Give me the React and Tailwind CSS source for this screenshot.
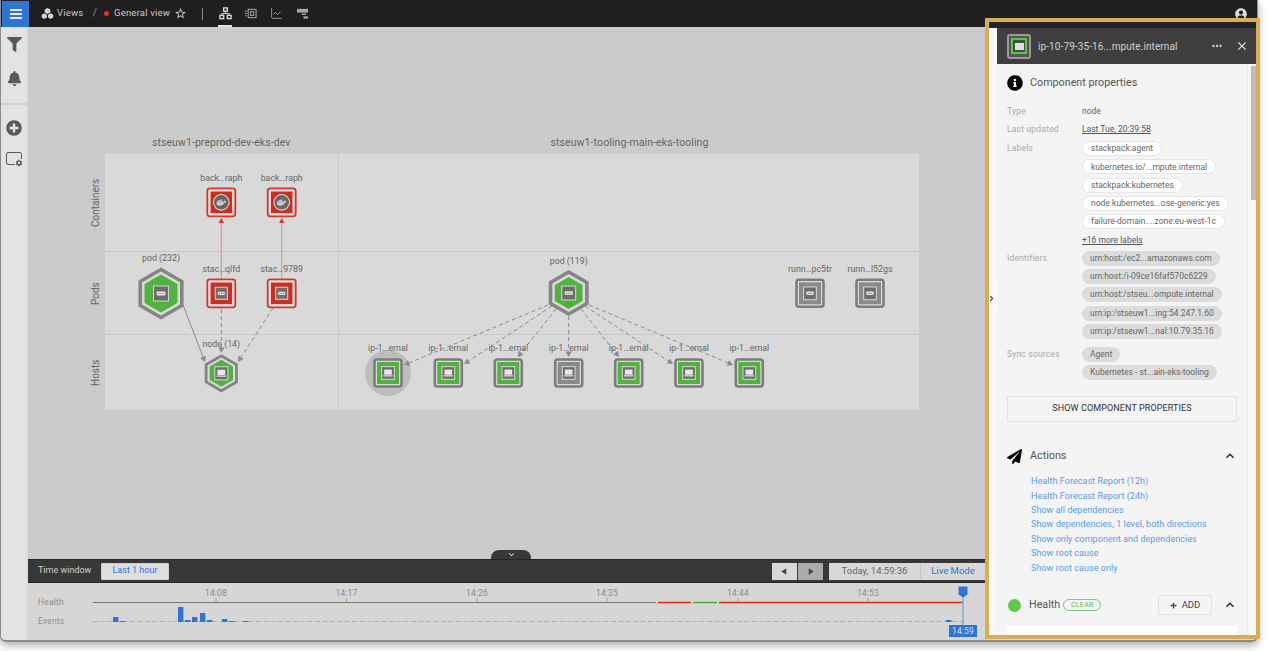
import React from 'react';
import { FaBell, FaDocker, FaFilter, FaInfoCircle, FaPaperPlane, FaPlus, FaPlusCircle, FaUserCircle } from 'react-icons/fa';
import { MdStarBorder, MdKeyboardArrowUp, MdKeyboardArrowDown, MdSearch, MdClose, MdMoreHoriz, MdChevronRight, MdFormatListBulleted, MdPlayArrow, MdSettings } from 'react-icons/md';
import { LineChart } from 'lucide-react';

const hexPoints = (cx, cy, r) => {
  const w = r * 0.866;
  return `${cx},${cy - r} ${cx + w},${cy - r / 2} ${cx + w},${cy + r / 2} ${cx},${cy + r} ${cx - w},${cy + r / 2} ${cx - w},${cy - r / 2}`;
};

const Glyph = ({ x, y, type, s = 1 }) => {
  if (type === 'docker') {
    return (
      <g>
        <circle cx={x} cy={y} r={7.8} fill="#666" stroke="#d8d8d8" strokeWidth="1.1" />
        <FaDocker x={x - 5} y={y - 5} size={10} color="#cfcfcf" />
      </g>
    );
  }
  const h = 7.5 * s;
  return (
    <g>
      <rect x={x - h} y={y - h} width={h * 2} height={h * 2} fill="#6e6e6e" stroke="#cfcfcf" strokeWidth="1.1" />
      {type === 'pod' ? (
        <g>
          <rect x={x - 4.4 * s} y={y - 2 * s} width={8.8 * s} height={4 * s} rx={1} fill="#e8e8e8" />
          <circle cx={x - 2.2 * s} cy={y} r={0.6} fill="#555" />
          <circle cx={x} cy={y} r={0.6} fill="#555" />
          <circle cx={x + 2.2 * s} cy={y} r={0.6} fill="#555" />
        </g>
      ) : (
        <g>
          <rect x={x - 4.5 * s} y={y - 4 * s} width={9 * s} height={6 * s} fill="#e8e8e8" />
          <rect x={x - 5.5 * s} y={y + 2.5 * s} width={11 * s} height={1.6 * s} fill="#d6d6d6" />
        </g>
      )}
    </g>
  );
};

const RedNode = ({ x, y, type }) => (
  <g>
    <rect x={x - 14} y={y - 14} width={28} height={28} rx={2.5} fill="#dcdcdc" stroke="#d8362a" strokeWidth="1.8" />
    <rect x={x - 11.2} y={y - 11.2} width={22.4} height={22.4} fill="#d02c20" stroke="#e6e6e6" strokeWidth="0.8" />
    <Glyph x={x} y={y} type={type} s={0.8} />
  </g>
);

const SquareNode = ({ x, y, type = 'host', fill = '#4fb33d' }) => (
  <g>
    <rect x={x - 13.5} y={y - 13.5} width={27} height={27} rx={2.5} fill="#dadada" stroke="#7c7c7c" strokeWidth="2.6" />
    <rect x={x - 11} y={y - 11} width={22} height={22} fill={fill} />
    <Glyph x={x} y={y} type={type} s={0.85} />
  </g>
);

const HexNode = ({ x, y, r, type, s = 1 }) => (
  <g>
    <polygon points={hexPoints(x, y, r)} fill="#d9d9d9" stroke="#858585" strokeWidth={r > 20 ? 3.6 : 2.8} />
    <polygon points={hexPoints(x, y, r - (r > 20 ? 5 : 4))} fill="#4fb33d" />
    <Glyph x={x} y={y} type={type} s={s} />
  </g>
);

const NodeLabel = ({ x, y, children }) => (
  <text x={x} y={y} textAnchor="middle" fontSize="8.8" fill="#666">
    {children}
  </text>
);

const hostXs = [388, 448.3, 508.3, 568.7, 628.7, 689, 749.3];
const podEdges = [
  [548, 305, 404, 365],
  [552, 306, 464, 364],
  [556, 309, 517.7, 357],
  [568.7, 316, 568.7, 357],
  [581, 309, 619, 357],
  [585, 306, 673, 364],
  [589, 305, 733, 365],
];

const Arrow = ({ x1, y1, x2, y2, color = '#8a8a8a', dashed, size = 5 }) => {
  const a = Math.atan2(y2 - y1, x2 - x1);
  const bx = x2 - Math.cos(a) * size * 1.1;
  const by = y2 - Math.sin(a) * size * 1.1;
  const px = Math.sin(a) * size * 0.62;
  const py = -Math.cos(a) * size * 0.62;
  return (
    <g>
      <line x1={x1} y1={y1} x2={bx} y2={by} stroke={color} strokeWidth="1" strokeDasharray={dashed ? '4 3' : undefined} />
      <polygon points={`${x2},${y2} ${bx + px},${by + py} ${bx - px},${by - py}`} fill={color} />
    </g>
  );
};

const Graph = () => (
  <svg className="absolute top-0 left-0 overflow-visible" width="815" height="258" viewBox="104 153 815 258" style={{ fontFamily: 'Roboto, sans-serif' }}>
    <circle cx={388} cy={373} r={23} fill="#bdbdbd" />
    <line x1={221.3} y1={279} x2={221.3} y2={222} stroke="#dc9a92" strokeWidth="1.2" />
    <line x1={281.7} y1={279} x2={281.7} y2={222} stroke="#dc9a92" strokeWidth="1.2" />
    <polygon points="221.3,218 218.5,223 224,223" fill="#d8362a" />
    <polygon points="281.7,218 279,223 284.5,223" fill="#d8362a" />
    <Arrow x1={183} y1={305} x2={205} y2={362} />
    <Arrow x1={221.3} y1={309} x2={221.3} y2={353} dashed />
    <Arrow x1={273} y1={308} x2={238} y2={362} dashed />
    {podEdges.map(([x1, y1, x2, y2]) => (
      <Arrow key={x2} x1={x1} y1={y1} x2={x2} y2={y2} dashed />
    ))}

    <NodeLabel x={221.3} y={181}>back…raph</NodeLabel>
    <NodeLabel x={281.7} y={181}>back…raph</NodeLabel>
    <RedNode x={221.3} y={202.3} type="docker" />
    <RedNode x={281.7} y={202.3} type="docker" />

    <NodeLabel x={161} y={261}>pod (232)</NodeLabel>
    <NodeLabel x={221.3} y={272}>stac…qlfd</NodeLabel>
    <NodeLabel x={281.7} y={272}>stac…9789</NodeLabel>
    <HexNode x={161} y={293.5} r={24} type="pod" />
    <RedNode x={221.3} y={293.3} type="pod" />
    <RedNode x={281.7} y={293.3} type="pod" />

    <NodeLabel x={221.3} y={347}>node (14)</NodeLabel>
    <HexNode x={221.3} y={373.3} r={17.5} type="host" s={0.87} />

    <NodeLabel x={568.7} y={264}>pod (119)</NodeLabel>
    <HexNode x={568.7} y={293} r={21} type="pod" s={0.93} />
    <NodeLabel x={810} y={272}>runn…pc5tr</NodeLabel>
    <NodeLabel x={870} y={272}>runn…l52gs</NodeLabel>
    <SquareNode x={810} y={293.3} type="pod" fill="#8a8a8a" />
    <SquareNode x={870} y={293.3} type="pod" fill="#8a8a8a" />

    {hostXs.map((x, i) => (
      <g key={x}>
        <NodeLabel x={x} y={351}>ip-1…ernal</NodeLabel>
        <SquareNode x={x} y={373} fill={i === 3 ? '#8a8a8a' : '#4fb33d'} />
      </g>
    ))}
  </svg>
);

const Bolt = ({ className, slash }) => (
  <svg viewBox="0 0 16 16" className={className} fill="currentColor">
    <path d="M9.5 1.5 4 9h3.2L6 14.5 12 6.5H8.6z" />
    {slash && <path d="M2.5 9.5 13.5 6" stroke="currentColor" strokeWidth="1" />}
  </svg>
);

const ToolBtn = ({ children, active }) => (
  <div className={`flex h-[20px] w-[24px] items-center justify-center border bg-[#d4d4d4] ${active ? 'border-[#bccfe2]' : 'border-[#c4c4c4]'}`}>
    {children}
  </div>
);

const TopBar = () => (
  <div className="flex h-[27px] shrink-0 items-center bg-[#1f1f1f] pl-[1px] text-[#c9c9c9]">
    <div className="flex h-[26px] w-[27px] items-center justify-center bg-[#2f74d6]">
      <div className="flex w-[12px] flex-col gap-[2px]">
        <div className="h-[2px] bg-[#e4ecf8]" />
        <div className="h-[2px] bg-[#e4ecf8]" />
        <div className="h-[2px] bg-[#e4ecf8]" />
      </div>
    </div>
    <svg viewBox="0 0 14 14" className="ml-[12px] h-[13px] w-[13px]" fill="#d4d4d4">
      <polygon points="7,1 10,2.6 10,6 7,7.6 4,6 4,2.6" />
      <polygon points="3.6,6.8 6.4,8.3 6.4,11.4 3.6,13 0.8,11.4 0.8,8.3" />
      <polygon points="10.4,6.8 13.2,8.3 13.2,11.4 10.4,13 7.6,11.4 7.6,8.3" />
    </svg>
    <span className="ml-[3px] text-[9.5px] tracking-[0.2px]">Views</span>
    <span className="ml-[9px] text-[11px] text-[#8c8c8c]">/</span>
    <span className="ml-[7px] h-[5px] w-[5px] rounded-full bg-[#d8362a]" />
    <span className="ml-[5px] text-[9.5px] tracking-[0.2px]">General view</span>
    <MdStarBorder className="ml-[4px] text-[13px] text-[#d0d0d0]" />
    <div className="ml-[15px] h-[12px] w-px bg-[#8a8a8a]" />
    <div className="relative ml-[15px] flex h-[27px] w-[14px] items-center justify-center">
      <svg viewBox="0 0 14 14" className="h-[13px] w-[13px]" fill="none" stroke="#d8d8d8" strokeWidth="1.5">
        <rect x="5" y="1" width="4" height="3.5" />
        <rect x="1" y="9" width="4" height="3.5" />
        <rect x="9" y="9" width="4" height="3.5" />
        <path d="M7 4.5V7M3 9V7H11V9" strokeWidth="1" />
      </svg>
      <div className="absolute right-0 bottom-0 left-0 h-[2px] bg-[#e0e0e0]" />
    </div>
    <svg viewBox="0 0 14 14" className="ml-[12px] h-[13px] w-[13px]" fill="none" stroke="#a8a8a8" strokeWidth="1.1">
      <rect x="4.5" y="2.5" width="8.5" height="9" />
      <rect x="7" y="5" width="3.5" height="4" />
      <path d="M1 4.5h2M1 7h2M1 9.5h2" />
    </svg>
    <LineChart className="ml-[13px] h-[13px] w-[13px] text-[#a8a8a8]" strokeWidth={1.6} />
    <svg viewBox="0 0 14 14" className="ml-[13px] h-[13px] w-[13px]" fill="#a8a8a8">
      <rect x="1" y="2" width="12" height="4" />
      <rect x="6" y="7" width="5" height="1.5" />
      <rect x="8" y="10" width="5" height="2.5" />
    </svg>
    <FaUserCircle className="mr-[10px] ml-auto text-[12px] text-[#dcdcdc]" />
  </div>
);

const Rail = () => (
  <div className="flex w-[27px] shrink-0 flex-col items-center border-r border-[#d8d8d8] bg-[#e3e3e3] pt-[10px] text-[#5a5a5a]">
    <FaFilter className="text-[15px]" />
    <FaBell className="mt-[19px] text-[15px]" />
    <div className="mt-[17px] h-[2px] w-full bg-[#d0d0d0]" />
    <FaPlusCircle className="mt-[15px] text-[16px]" />
    <div className="relative mt-[16px] h-[13px] w-[16px] rounded-[2px] border-[1.5px] border-[#5a5a5a]">
      <MdSettings className="absolute -right-[2px] -bottom-[3px] bg-[#e3e3e3] text-[8px]" />
    </div>
  </div>
);

const Canvas = () => (
  <div className="relative flex flex-1 flex-col bg-[#cbcbcb] pt-[12px]">
    <div className="flex justify-end gap-[1px]">
      <ToolBtn><Bolt slash className="h-[11px] w-[11px] text-[#9a9a9a]" /></ToolBtn>
      <ToolBtn><Bolt slash className="h-[11px] w-[11px] text-[#444]" /></ToolBtn>
      <ToolBtn active><Bolt className="h-[12px] w-[12px] text-[#2f74d6]" /></ToolBtn>
      <div className="w-[3px]" />
      <ToolBtn active>
        <svg viewBox="0 0 12 12" className="h-[11px] w-[11px]" fill="#2f74d6" stroke="#2f74d6">
          <circle cx="6" cy="2.5" r="1.4" />
          <circle cx="2" cy="9.5" r="1.4" />
          <circle cx="10" cy="9.5" r="1.4" />
          <path d="M6 2.5 2 9.5M6 2.5l4 7" fill="none" />
        </svg>
      </ToolBtn>
      <ToolBtn><MdFormatListBulleted className="text-[14px] text-[#333]" /></ToolBtn>
    </div>

    <div className="mt-[74px] ml-[60px] grid w-[832px] grid-cols-[16px_235px_581px] grid-rows-[20px_99px_83px_76px] text-[#666]">
      <div />
      <div className="pl-[48px] text-[10.5px] leading-[20px] tracking-[0.07px]">stseuw1-preprod-dev-eks-dev</div>
      <div className="text-center text-[10.5px] leading-[20px] tracking-[0.1px]">stseuw1-tooling-main-eks-tooling</div>

      {['Containers', 'Pods', 'Hosts'].map((name, i) => (
        <React.Fragment key={name}>
          <div className="flex rotate-180 items-center justify-center pl-[1px] text-[10px] [writing-mode:vertical-rl]">{name}</div>
          <div className={`border-r border-b border-l border-[#cacaca] bg-[#d9d9d9] ${i === 0 ? 'border-t' : ''}`} />
          <div className={`border-r border-b border-[#cacaca] bg-[#d9d9d9] ${i === 0 ? 'border-t' : ''}`} />
        </React.Fragment>
      ))}
      <div className="pointer-events-none absolute top-[126px] left-[76px]">
        <Graph />
      </div>
    </div>

    <div className="mt-auto mb-[12px] flex flex-col items-end">
      <div className="flex h-[20px] w-[20px] items-center justify-center border border-[#c4c4c4] bg-[#d8d8d8]">
        <MdSearch className="text-[12px] text-[#666]" />
      </div>
      <div className="mt-[3px] flex h-[21px] w-[20px] items-center justify-center border border-[#c4c4c4] bg-[#d8d8d8] text-[#555]">
        <FaPlus className="text-[7px]" />
      </div>
      <div className="flex h-[21px] w-[20px] items-center justify-center border border-[#b8cbe0] bg-[#d8d8d8]">
        <svg viewBox="0 0 10 10" className="h-[9px] w-[9px]" fill="none" stroke="#2f74d6" strokeWidth="1.6">
          <path d="M1 3.5V1h2.5M6.5 1H9v2.5M9 6.5V9H6.5M3.5 9H1V6.5" />
        </svg>
      </div>
      <div className="flex h-[20px] w-[20px] items-center justify-center border border-[#c4c4c4] bg-[#d8d8d8]">
        <div className="h-px w-[5px] bg-[#555]" />
      </div>
    </div>

    <div className="absolute bottom-0 left-[463px] flex h-[9px] w-[40px] items-center justify-center rounded-t-[8px] bg-[#383838]">
      <MdKeyboardArrowDown className="text-[11px] text-[#ddd]" />
    </div>
  </div>
);

const TimeBar = () => (
  <div className="flex h-[24px] shrink-0 items-center border-y border-[#262626] bg-[#383838] pl-[10px] text-[9.5px]">
    <span className="w-[63px] text-[9px] text-[#cfcfcf]">Time window</span>
    <div className="flex h-[17px] w-[68px] items-center justify-center rounded-[1px] border border-[#bfcfe0] bg-[#dedede] text-[9px] text-[#2f74d6]">Last 1 hour</div>
    <div className="ml-[603px] flex h-[17px] w-[25px] items-center justify-center bg-[#d8d8d8] text-[#444]">
      <MdPlayArrow className="rotate-180 text-[11px]" />
    </div>
    <div className="ml-px flex h-[17px] w-[25px] items-center justify-center bg-[#ababab] text-[#444]">
      <MdPlayArrow className="text-[11px]" />
    </div>
    <div className="ml-[6px] flex h-[17px] w-[91px] items-center justify-center bg-[#d8d8d8] text-[#666]">Today, 14:59:36</div>
    <div className="flex h-[17px] w-[65px] items-center justify-center border-l border-[#c8c8c8] bg-[#d8d8d8] text-[#2f74d6]">Live Mode</div>
  </div>
);

const ticks = [[216, '14:08'], [346.5, '14:17'], [477, '14:26'], [607, '14:35'], [738, '14:44'], [868, '14:53']];
const bars = [[113, 5], [120, 1], [178, 15], [185, 2], [192, 5], [200, 9], [207, 2], [222, 3], [229, 1], [243, 1], [946, 2]];

const Timeline = () => (
  <div className="flex h-[57px] shrink-0 bg-[#d6d6d6] pl-[10px] text-[8.5px] tracking-[0.2px] text-[#8e8e8e]">
    <div className="flex w-[55px] shrink-0 flex-col gap-[8px] pt-[14px]">
      <span className="leading-[11px]">Health</span>
      <span className="leading-[11px]">Events</span>
    </div>
    <svg width="892" height="57" viewBox="93 583 892 57" style={{ fontFamily: 'Roboto, sans-serif' }}>
      {ticks.map(([x, t]) => (
        <g key={t}>
          <text x={x} y={596} textAnchor="middle" fontSize="8.5" fill="#8a8a8a">{t}</text>
          <line x1={x} y1={598} x2={x} y2={602} stroke="#a0a0a0" />
        </g>
      ))}
      <line x1={93} y1={602.5} x2={656} y2={602.5} stroke="#777" strokeWidth="1.2" />
      <line x1={658} y1={602.5} x2={691} y2={602.5} stroke="#e02a1c" strokeWidth="1.5" />
      <line x1={693} y1={602.5} x2={717} y2={602.5} stroke="#3fb52a" strokeWidth="1.5" />
      <line x1={719} y1={602.5} x2={963} y2={602.5} stroke="#e02a1c" strokeWidth="1.5" />
      <line x1={93} y1={621.5} x2={963} y2={621.5} stroke="#b4b4b4" strokeDasharray="5 2.4" />
      {bars.map(([x, h]) => (
        <rect key={x} x={x} y={622 - h} width={5.4} height={h} fill="#2f74d6" />
      ))}
      <line x1={963} y1={596} x2={963} y2={626} stroke="#6e9fe2" strokeWidth="1.2" />
      <path d="M958.5 586.5h9v8l-4.5 3-4.5-3z" fill="#2f74d6" />
      <rect x={949} y={625} width={28} height={12} fill="#2f74d6" />
      <text x={963} y={634} textAnchor="middle" fontSize="8.5" fill="#d5e3f6">14:59</text>
    </svg>
  </div>
);

const whiteChips = ['stackpack:agent', 'kubernetes.io/...mpute.internal', 'stackpack:kubernetes', 'node.kubernetes...ose-generic:yes', 'failure-domain....zone:eu-west-1c'];
const idChips = ['urn:host:/ec2...amazonaws.com', 'urn:host:/i-09ce16faf570c6229', 'urn:host:/stseu...ompute.internal', 'urn:ip:/stseuw1...ing:54.247.1.60', 'urn:ip:/stseuw1...nal:10.79.35.16'];
const syncChips = ['Agent', 'Kubernetes - st...ain-eks-tooling'];
const links = ['Health Forecast Report (12h)', 'Health Forecast Report (24h)', 'Show all dependencies', 'Show dependencies, 1 level, both directions', 'Show only component and dependencies', 'Show root cause', 'Show root cause only'];

const Chip = ({ children, gray }) => (
  <div className={`flex h-[15px] w-fit items-center rounded-full px-[8px] text-[8.5px] whitespace-nowrap text-[#666] ${gray ? 'bg-[#dcdcdc]' : 'border border-[#e6e6e6] bg-white'}`}>
    {children}
  </div>
);

const PropRow = ({ label, children, className = '' }) => (
  <div className={`grid grid-cols-[75px_1fr] ${className}`}>
    <span className="text-[8.5px] leading-[15px] tracking-[0.2px] text-[#a8a8a8]">{label}</span>
    <div className="flex flex-col gap-[3.3px]">{children}</div>
  </div>
);

const Drawer = () => (
  <div className="absolute top-[18px] left-[985px] flex h-[621px] w-[275px] flex-col border-4 border-[#d6b04f] bg-[#f8f8f8]" style={{ fontFamily: 'Roboto, sans-serif' }}>
    <div className="h-[6px] shrink-0 bg-[#232323]" />
    <div className="flex min-h-0 flex-1 flex-col pl-[8px]">
      <div className="flex h-[36px] shrink-0 items-center bg-[#3f3f3f] pr-[7px] pl-[10px] text-[#cfcfcf]">
        <div className="flex h-[25px] w-[24px] items-center justify-center rounded-[3px] border-2 border-[#9a9a9a] bg-[#555]">
          <div className="flex h-[16px] w-[16px] items-center justify-center border-2 border-[#55c93f] bg-[#4a4a4a]">
            <div className="h-[7px] w-[9px] bg-[#e0e0e0]" />
          </div>
        </div>
        <span className="ml-[7px] text-[10px] tracking-[0.1px] whitespace-nowrap">ip-10-79-35-16...mpute.internal</span>
        <MdMoreHoriz className="ml-auto text-[14px] text-[#d0d0d0]" />
        <MdClose className="ml-[11px] text-[14px] text-[#e4e4e4]" />
      </div>

      <div className="flex min-h-0 flex-1">
        <div className="min-h-0 w-[251px] overflow-hidden border-r border-[#eaeaea] bg-[#f4f4f4] px-[10px] pt-[11px]">
          <div className="flex items-center gap-[7px]">
            <FaInfoCircle className="text-[16px] text-black" />
            <span className="text-[10.75px] text-[#555]">Component properties</span>
          </div>

          <PropRow label="Type" className="mt-[13px]">
            <span className="text-[8.5px] leading-[15px] text-[#666]">node</span>
          </PropRow>
          <PropRow label="Last updated" className="mt-[3px]">
            <span className="text-[8.5px] leading-[15px] text-[#555] underline">Last Tue, 20:39:58</span>
          </PropRow>
          <PropRow label="Labels" className="mt-[4px]">
            {whiteChips.map((c) => <Chip key={c}>{c}</Chip>)}
            <span className="text-[8.5px] leading-[15px] text-[#555] underline">+16 more labels</span>
          </PropRow>
          <PropRow label="Identifiers" className="mt-[3px]">
            {idChips.map((c) => <Chip key={c} gray>{c}</Chip>)}
          </PropRow>
          <PropRow label="Sync sources" className="mt-[8px]">
            {syncChips.map((c) => <Chip key={c} gray>{c}</Chip>)}
          </PropRow>

          <div className="mt-[16px] flex h-[26px] items-center justify-center border border-[#e2e2e2] text-[9px] tracking-[0.1px] text-[#333]">
            SHOW COMPONENT PROPERTIES
          </div>

          <div className="mt-[26px] flex items-center">
            <FaPaperPlane className="text-[15px] text-black" />
            <span className="ml-[8px] text-[10.75px] text-[#555]">Actions</span>
            <MdKeyboardArrowUp className="mr-[-1px] ml-auto text-[16px] text-[#222]" />
          </div>
          <div className="mt-[10px] flex flex-col pl-[24px]">
            {links.map((l) => (
              <span key={l} className="text-[9px] leading-[14.4px] tracking-[0.05px] text-[#5a9bf0]">{l}</span>
            ))}
          </div>

          <div className="mt-[20px] flex items-center">
            <span className="ml-[1px] h-[13px] w-[13px] rounded-full bg-[#5ccb45]" />
            <span className="ml-[8px] text-[10.75px] text-[#555]">Health</span>
            <span className="ml-[3px] flex h-[12px] w-[38px] items-center justify-center rounded-full border border-[#7fc876] text-[7px] tracking-[0.3px] text-[#6bb060]">CLEAR</span>
            <div className="ml-auto flex h-[20px] w-[54px] items-center justify-center gap-[5px] border border-[#e2e2e2] text-[9.5px] text-[#444]">
              <FaPlus className="text-[7px]" /> ADD
            </div>
            <MdKeyboardArrowUp className="mr-[-1px] ml-[10px] text-[16px] text-[#222]" />
          </div>
          <div className="mt-[11px] h-[20px] bg-white" />
        </div>
        <div className="w-[8px] shrink-0 pt-[2px] pl-[3px]">
          <div className="h-[134px] w-[5px] bg-[#bcbcbc]" />
        </div>
      </div>
    </div>
    <div className="absolute top-[257px] left-0 flex h-[38px] w-[9px] items-center rounded-r-[6px] bg-[#f8f8f8]">
      <MdChevronRight className="-ml-[3px] text-[11px] text-[#222]" />
    </div>
  </div>
);

export default function App() {
  return (
    <div className="relative h-[651px] w-[1270px] overflow-hidden bg-white">
      <div className="flex h-[642px] w-[1258px] flex-col overflow-hidden rounded-b-[6px] border-x border-b-2 border-[#8c8c8c] bg-[#e3e3e3] shadow-[0_3px_8px_rgba(0,0,0,0.35)]" style={{ fontFamily: 'Roboto, sans-serif' }}>
        <TopBar />
        <div className="flex min-h-0 flex-1">
          <Rail />
          <div className="flex min-w-0 flex-1 flex-col">
            <Canvas />
            <TimeBar />
            <Timeline />
          </div>
        </div>
      </div>
      <Drawer />
    </div>
  );
}
